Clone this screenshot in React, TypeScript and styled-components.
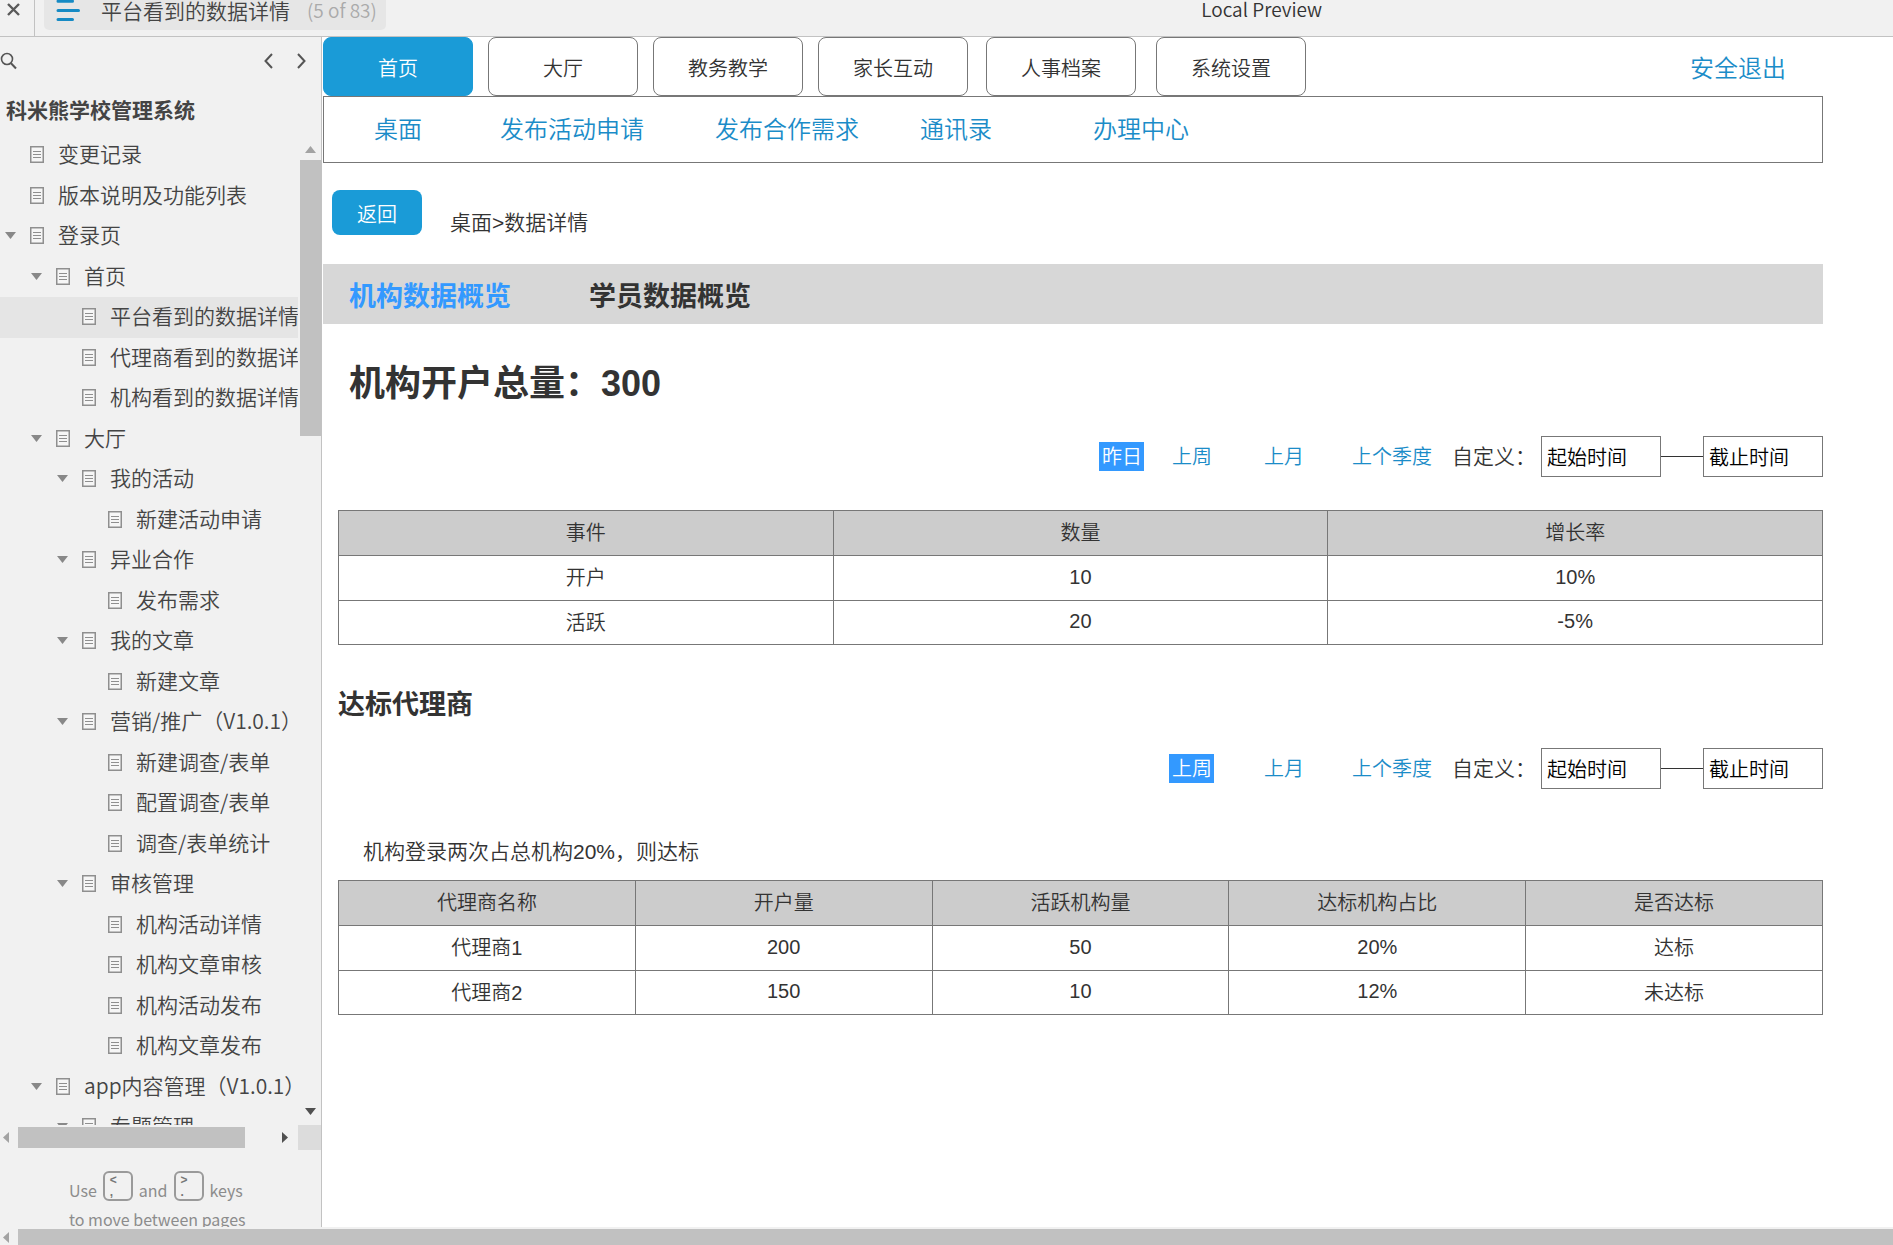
import React from "react";
import styled, { createGlobalStyle, css } from "styled-components";

const BLUE = "#1a9bd7";
const LINK = "#1b8cc8";
const LINE = "#777777";
const CHROME = "#f1f1f1";
const UI_FONT = `"Noto Sans CJK SC", "Noto Sans", sans-serif`;
const PAGE_FONT = `"Liberation Sans", "Noto Sans CJK SC", sans-serif`;

const Global = createGlobalStyle`
  *, *::before, *::after { box-sizing: border-box; }
  body { margin: 0; background: #fff; overflow: hidden; }
  button { border: 0; padding: 0; margin: 0; background: none; font: inherit; color: inherit; cursor: pointer; }
  a { color: inherit; text-decoration: none; }
  h1, h2, p, ul { margin: 0; padding: 0; }
  ul { list-style: none; }
  svg { display: block; flex: none; }
`;

const Shell = styled.div`
  height: 100vh;
  display: flex;
  flex-direction: column;
  font-family: ${UI_FONT};
  font-weight: 350;
  color: #333;
`;

/* ---------- top bar ---------- */

const TopBar = styled.header`
  height: 37px;
  flex: none;
  display: flex;
  align-items: flex-start;
  background: ${CHROME};
  border-bottom: 1px solid #c2c2c2;
`;

const CloseButton = styled.button`
  width: 35px;
  height: 36px;
  padding: 2px 0 0 6px;
  display: flex;
  align-items: flex-start;
  border-right: 1px solid #c2c2c2;
`;

const PageTab = styled.div`
  height: 30px;
  margin-left: 9px;
  padding: 0 9px 0 12px;
  display: flex;
  align-items: flex-start;
  background: #e6e6e6;
  border-radius: 0 0 5px 5px;
`;

const PageName = styled.span`
  margin-left: 21px;
  font-size: 21px;
  line-height: 20px;
  color: #444;
`;

const PageCount = styled.span`
  margin-left: 17px;
  font-size: 19px;
  line-height: 20px;
  color: #aaa;
`;

const Spacer = styled.span<{ $grow: number }>`
  flex: ${(p) => p.$grow} 1 0;
`;

const ProjectName = styled.span`
  font-size: 19px;
  line-height: 18px;
  color: #333;
`;

/* ---------- sidebar ---------- */

const Body = styled.div`
  flex: 1;
  min-height: 0;
  display: flex;
`;

const Sidebar = styled.aside`
  width: 322px;
  flex: none;
  display: flex;
  flex-direction: column;
  background: ${CHROME};
  border-right: 1px solid #c2c2c2;
`;

const SearchRow = styled.div`
  height: 48px;
  flex: none;
  display: flex;
  align-items: center;
  gap: 24px;
  padding-right: 15px;
`;

const SearchButton = styled.button`
  margin-right: auto;
`;

const ProjectTitle = styled.h2`
  height: 50px;
  flex: none;
  padding-left: 6px;
  font-size: 21px;
  line-height: 48px;
  font-weight: 700;
  color: #444;
`;

const TreePane = styled.div`
  flex: 1;
  min-height: 0;
  display: grid;
  grid-template-columns: 1fr 23px;
  grid-template-rows: 1fr 25px;
`;

const Tree = styled.ul`
  min-height: 0;
  overflow: hidden;
  display: grid;
  grid-auto-rows: 41px 40px;
`;

const TreeRow = styled.li<{ $level: number; $active: boolean }>`
  display: flex;
  align-items: center;
  min-width: 0;
  overflow: hidden;
  padding: 0 0 2px ${(p) => 5 + p.$level * 26}px;
  background: ${(p) => (p.$active ? "#e5e5e5" : "transparent")};
`;

const Toggle = styled.button`
  width: 25px;
  height: 20px;
  flex: none;
  display: flex;
  align-items: center;
`;

const ToggleGap = styled.span`
  width: 25px;
  flex: none;
`;

const TreeLink = styled.a`
  display: flex;
  align-items: center;
  gap: 14px;
  color: #444;
`;

const TreeName = styled.span`
  padding-bottom: 3px;
  font-size: 21px;
  line-height: 30px;
  white-space: nowrap;
`;

const VBar = styled.div`
  display: flex;
  flex-direction: column;
  padding: 3px 0 3px 2px;
`;

const HBar = styled.div`
  display: flex;
  padding: 2px 0;
`;

const ArrowButton = styled.button<{ $axis: "x" | "y" }>`
  flex: none;
  display: flex;
  align-items: center;
  justify-content: center;
  ${(p) =>
    p.$axis === "x"
      ? css`
          width: 18px;
          padding-right: 8px;
        `
      : css`
          height: 22px;
        `}
`;

const Thumb = styled.span<{ $grow: number }>`
  flex: ${(p) => p.$grow} 1 0;
  background: #c1c1c1;
`;

const Corner = styled.span`
  background: #dcdcdc;
`;

const Hint = styled.p`
  height: 77px;
  flex: none;
  overflow: hidden;
  padding: 21px 0 0 69px;
  font-size: 16px;
  line-height: 29px;
  font-weight: 400;
  color: #8c8c8c;
`;

const HintLine = styled.span`
  display: flex;
  align-items: flex-end;
  gap: 6px;
  white-space: nowrap;
`;

const Key = styled.kbd`
  width: 30px;
  height: 30px;
  margin-bottom: 4px;
  padding: 1px 5px;
  display: flex;
  flex-direction: column;
  border: 2px solid #9a9a9a;
  border-radius: 6px;
  font-family: ${PAGE_FONT};
  font-size: 12px;
  font-weight: 700;
  line-height: 12px;
  color: #777;
`;

const PageScroll = styled.div`
  height: 18px;
  flex: none;
  display: flex;
  padding-top: 2px;
  background: ${CHROME};
`;

/* ---------- prototype page ---------- */

const Page = styled.main`
  flex: 1;
  min-width: 0;
  padding: 0 70px 0 1px;
  background: #fff;
  font-family: ${PAGE_FONT};
`;

const NavRow = styled.nav`
  height: 59px;
  display: flex;
  align-items: stretch;
`;

const NavTab = styled.button<{ $active?: boolean; $gap: number }>`
  width: 150px;
  margin-left: ${(p) => p.$gap}px;
  padding-top: 2px;
  border: 1px solid ${(p) => (p.$active ? BLUE : LINE)};
  border-radius: 8px;
  background: ${(p) => (p.$active ? BLUE : "#fff")};
  color: ${(p) => (p.$active ? "#fff" : "#333")};
  font-size: 20px;
`;

const Logout = styled.a`
  margin-left: auto;
  margin-right: 37px;
  padding-top: 4px;
  align-self: center;
  font-size: 24px;
  line-height: 36px;
  color: ${LINK};
`;

const SubNav = styled.nav`
  height: 67px;
  display: grid;
  grid-template-columns: 126px 215px 205px 173px auto;
  align-items: center;
  padding-left: 50px;
  border: 1px solid ${LINE};
  font-size: 24px;
  line-height: 36px;
  color: ${LINK};
`;

const CrumbRow = styled.div`
  margin: 27px 0 29px 9px;
  display: flex;
  align-items: flex-end;
  gap: 28px;
`;

const BackButton = styled.button`
  width: 90px;
  height: 45px;
  padding-top: 2px;
  border-radius: 8px;
  background: ${BLUE};
  color: #fff;
  font-size: 20px;
`;

const Crumb = styled.span`
  font-size: 21px;
  line-height: 24px;
`;

const OverviewTabs = styled.div`
  height: 60px;
  display: flex;
  align-items: center;
  gap: 78px;
  padding: 6px 0 0 26px;
  background: #d7d7d7;
`;

const OverviewTab = styled.button<{ $active?: boolean }>`
  font-size: 27px;
  line-height: 40px;
  font-weight: 700;
  color: ${(p) => (p.$active ? "#3399ff" : "#333")};
`;

const Total = styled.h1`
  margin: 36px 0 28px 26px;
  font-size: 36px;
  line-height: 48px;
  font-weight: 700;
`;

const SectionTitle = styled.h2`
  margin: 42px 0 25px 15px;
  font-size: 27px;
  line-height: 36px;
  font-weight: 700;
`;

const FilterRow = styled.form`
  height: 41px;
  display: grid;
  grid-template-columns: 70px 92px 88px 100px 89px 120px 42px 120px;
  justify-content: end;
  align-items: center;
  font-size: 20px;
`;

const RangeButton = styled.button<{ $active: boolean; $column: number }>`
  grid-column: ${(p) => p.$column};
  justify-self: start;
  margin-left: -3px;
  padding: 2px 2px 0 3px;
  height: 29px;
  line-height: 27px;
  background: ${(p) => (p.$active ? "#3399ff" : "transparent")};
  color: ${(p) => (p.$active ? "#fff" : LINK)};
`;

const CustomLabel = styled.label`
  font-size: 21px;
  line-height: 29px;
  white-space: nowrap;
`;

const DateInput = styled.input`
  width: 100%;
  height: 41px;
  padding: 0 5px;
  border: 1px solid ${LINE};
  border-radius: 0;
  background: #fff;
  color: #000;
  font: inherit;
`;

const Dash = styled.span`
  height: 1px;
  background: #333;
`;

const Note = styled.p`
  margin: 49px 0 -19px 40px;
  font-size: 21px;
  line-height: 28px;
`;

const DataTable = styled.table`
  width: calc(100% - 15px);
  margin: 33px 0 0 15px;
  border-collapse: collapse;
  table-layout: fixed;
  font-size: 20px;
  line-height: 28px;
  text-align: center;
`;

const HeadCell = styled.th`
  height: 45px;
  padding: 0;
  border: 1px solid ${LINE};
  background: #ccc;
  font-weight: inherit;
`;

const Cell = styled.td<{ $numeric: boolean }>`
  height: 45px;
  padding: 0 0 ${(p) => (p.$numeric ? 3 : 0)}px;
  border: 1px solid ${LINE};

  tr:last-child > & {
    height: 44px;
  }
`;

/* ---------- drawings ---------- */

const CloseIcon = () => (
  <svg width="15" height="15" viewBox="0 0 15 15" fill="none" stroke="#5a5a5a" strokeWidth="2.4">
    <path d="M2 2l11 11M13 2L2 13" />
  </svg>
);

const MenuIcon = () => (
  <svg width="24" height="22" viewBox="0 0 24 22" stroke="#168ac4" strokeWidth="3" strokeLinecap="round">
    <path d="M2 1.2h14.500M2 10.500h20.500M2 19.500h14.500" />
  </svg>
);

const SearchIcon = () => (
  <svg width="17" height="18" viewBox="0 0 17 18" fill="none" stroke="#555" strokeWidth="1.600">
    <circle cx="7" cy="7" r="5.500" />
    <path d="M11 11.200l5 5.300" strokeWidth="2" />
  </svg>
);

const Chevron = ({ left }: { left?: boolean }) => (
  <svg width="9" height="16" viewBox="0 0 9 16" fill="none" stroke="#555" strokeWidth="2">
    <path d={left ? "M8 1L1.500 8L8 15" : "M1 1l6.500 7L1 15"} />
  </svg>
);

const PageIcon = () => (
  <svg width="14" height="17" viewBox="0 0 14 17" fill="none" stroke="#8f8f8f">
    <rect x=".75" y=".75" width="12.500" height="15.500" strokeWidth="1.500" fill="#f6f6f6" />
    <path d="M3 5.500h8M3 8.500h8M3 11.500h8" />
  </svg>
);

const shapes = {
  down: "M0 0h11L5.500 7z",
  up: "M0 7h11L5.500 0z",
  left: "M7 0v11L1 5.500z",
  right: "M0 0v11l6-5.500z",
};

const Triangle = ({ dir, fill }: { dir: keyof typeof shapes; fill: string }) => {
  const vertical = dir === "down" || dir === "up";
  const w = vertical ? 11 : 7;
  const h = vertical ? 7 : 11;
  return (
    <svg width={w} height={h} viewBox={`0 0 ${w} ${h}`} fill={fill}>
      <path d={shapes[dir]} />
    </svg>
  );
};

/* ---------- data ---------- */

type Node = { level: number; name: string; open?: boolean };

const nodes: Node[] = [
  { level: 0, name: "变更记录" },
  { level: 0, name: "版本说明及功能列表" },
  { level: 0, name: "登录页", open: true },
  { level: 1, name: "首页", open: true },
  { level: 2, name: "平台看到的数据详情" },
  { level: 2, name: "代理商看到的数据详情" },
  { level: 2, name: "机构看到的数据详情" },
  { level: 1, name: "大厅", open: true },
  { level: 2, name: "我的活动", open: true },
  { level: 3, name: "新建活动申请" },
  { level: 2, name: "异业合作", open: true },
  { level: 3, name: "发布需求" },
  { level: 2, name: "我的文章", open: true },
  { level: 3, name: "新建文章" },
  { level: 2, name: "营销/推广（V1.0.1）", open: true },
  { level: 3, name: "新建调查/表单" },
  { level: 3, name: "配置调查/表单" },
  { level: 3, name: "调查/表单统计" },
  { level: 2, name: "审核管理", open: true },
  { level: 3, name: "机构活动详情" },
  { level: 3, name: "机构文章审核" },
  { level: 3, name: "机构活动发布" },
  { level: 3, name: "机构文章发布" },
  { level: 1, name: "app内容管理（V1.0.1）", open: true },
  { level: 2, name: "专题管理", open: true },
];

const currentPage = "平台看到的数据详情";

const tabs = [
  { name: "首页", gap: 0 },
  { name: "大厅", gap: 15 },
  { name: "教务教学", gap: 15 },
  { name: "家长互动", gap: 15 },
  { name: "人事档案", gap: 18 },
  { name: "系统设置", gap: 20 },
];

const subLinks = ["桌面", "发布活动申请", "发布合作需求", "通讯录", "办理中心"];

const Filters = ({ id, ranges }: { id: string; ranges: string[] }) => (
  <FilterRow>
    {ranges.map((r, i) => (
      <RangeButton key={r} type="button" $active={i === 0} $column={5 - ranges.length + i}>
        {r}
      </RangeButton>
    ))}
    <CustomLabel htmlFor={id}>自定义：</CustomLabel>
    <DateInput id={id} defaultValue="起始时间" />
    <Dash />
    <DateInput aria-label="截止时间" defaultValue="截止时间" />
  </FilterRow>
);

const Data = ({ head, rows }: { head: string[]; rows: string[][] }) => (
  <DataTable>
    <thead>
      <tr>
        {head.map((h) => (
          <HeadCell key={h} scope="col">{h}</HeadCell>
        ))}
      </tr>
    </thead>
    <tbody>
      {rows.map((row) => (
        <tr key={row[0]}>
          {row.map((cell, i) => (
            <Cell key={i} $numeric={/^[-\d%]+$/.test(cell)}>{cell}</Cell>
          ))}
        </tr>
      ))}
    </tbody>
  </DataTable>
);

export default function App() {
  return (
    <Shell>
      <Global />
      <TopBar>
        <CloseButton aria-label="Close">
          <CloseIcon />
        </CloseButton>
        <PageTab>
          <MenuIcon />
          <PageName>{currentPage}</PageName>
          <PageCount>(5 of 83)</PageCount>
        </PageTab>
        <Spacer $grow={10} />
        <ProjectName>Local Preview</ProjectName>
        <Spacer $grow={7} />
      </TopBar>

      <Body>
        <Sidebar>
          <SearchRow>
            <SearchButton aria-label="Search">
              <SearchIcon />
            </SearchButton>
            <button aria-label="Previous page">
              <Chevron left />
            </button>
            <button aria-label="Next page">
              <Chevron />
            </button>
          </SearchRow>
          <ProjectTitle>科米熊学校管理系统</ProjectTitle>
          <TreePane>
            <Tree>
              {nodes.map((n) => (
                <TreeRow key={n.name} $level={n.level} $active={n.name === currentPage}>
                  {n.open ? (
                    <Toggle aria-label="Collapse">
                      <Triangle dir="down" fill="#888" />
                    </Toggle>
                  ) : (
                    <ToggleGap />
                  )}
                  <TreeLink href="#">
                    <PageIcon />
                    <TreeName>{n.name}</TreeName>
                  </TreeLink>
                </TreeRow>
              ))}
            </Tree>
            <VBar>
              <ArrowButton $axis="y" aria-label="Scroll up">
                <Triangle dir="up" fill="#a3a3a3" />
              </ArrowButton>
              <Thumb $grow={5} />
              <Spacer $grow={12} />
              <ArrowButton $axis="y" aria-label="Scroll down">
                <Triangle dir="down" fill="#505050" />
              </ArrowButton>
            </VBar>
            <HBar>
              <ArrowButton $axis="x" aria-label="Scroll left">
                <Triangle dir="left" fill="#a3a3a3" />
              </ArrowButton>
              <Thumb $grow={13} />
              <Spacer $grow={2} />
              <ArrowButton $axis="x" aria-label="Scroll right">
                <Triangle dir="right" fill="#505050" />
              </ArrowButton>
            </HBar>
            <Corner />
          </TreePane>
          <Hint>
            <HintLine>
              Use
              <Key>
                <span>&lt;</span>
                <span>,</span>
              </Key>
              and
              <Key>
                <span>&gt;</span>
                <span>.</span>
              </Key>
              keys
            </HintLine>
            <HintLine>to move between pages</HintLine>
          </Hint>
        </Sidebar>

        <Page>
          <NavRow>
            {tabs.map((t, i) => (
              <NavTab key={t.name} $active={i === 0} $gap={t.gap}>
                {t.name}
              </NavTab>
            ))}
            <Logout href="#">安全退出</Logout>
          </NavRow>
          <SubNav>
            {subLinks.map((s) => (
              <a key={s} href="#">{s}</a>
            ))}
          </SubNav>

          <CrumbRow>
            <BackButton>返回</BackButton>
            <Crumb>桌面&gt;数据详情</Crumb>
          </CrumbRow>

          <OverviewTabs>
            <OverviewTab $active>机构数据概览</OverviewTab>
            <OverviewTab>学员数据概览</OverviewTab>
          </OverviewTabs>

          <Total>机构开户总量：300</Total>
          <Filters id="org-start" ranges={["昨日", "上周", "上月", "上个季度"]} />
          <Data
            head={["事件", "数量", "增长率"]}
            rows={[
              ["开户", "10", "10%"],
              ["活跃", "20", "-5%"],
            ]}
          />

          <SectionTitle>达标代理商</SectionTitle>
          <Filters id="agent-start" ranges={["上周", "上月", "上个季度"]} />
          <Note>机构登录两次占总机构20%，则达标</Note>
          <Data
            head={["代理商名称", "开户量", "活跃机构量", "达标机构占比", "是否达标"]}
            rows={[
              ["代理商1", "200", "50", "20%", "达标"],
              ["代理商2", "150", "10", "12%", "未达标"],
            ]}
          />
        </Page>
      </Body>

      <PageScroll>
        <ArrowButton $axis="x" aria-label="Scroll page left">
          <Triangle dir="left" fill="#a3a3a3" />
        </ArrowButton>
        <Thumb $grow={1} />
      </PageScroll>
    </Shell>
  );
}
